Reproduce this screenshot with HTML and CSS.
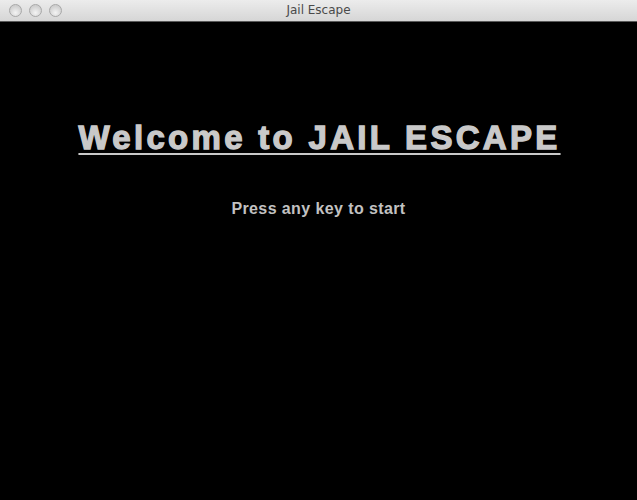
FILE: index.html
```html
<!DOCTYPE html>
<html>
<head>
<meta charset="utf-8">
<link rel="stylesheet" href="styles.css">
</head>
<body>
<div class="window">
  <div class="titlebar">
    <div class="lights">
      <span class="light"></span><span class="light"></span><span class="light"></span>
    </div>
    <div class="title">Jail Escape</div>
  </div>
  <main class="screen">
    <h1 class="heading">Welcome to JAIL ESCAPE</h1>
    <p class="prompt">Press any key to start</p>
  </main>
</div>
</body>
</html>
```
FILE: styles.css
```css
html, body {
  margin: 0;
  padding: 0;
  width: 637px;
  height: 500px;
  overflow: hidden;
  background: #000;
}
.window {
  display: flex;
  flex-direction: column;
  width: 637px;
  height: 500px;
}
.titlebar {
  position: relative;
  height: 21px;
  flex: none;
  background: linear-gradient(#ececec, #d6d6d6);
  border-bottom: 1px solid #5a5a5a;
  display: flex;
  align-items: center;
  justify-content: center;
}
.lights {
  position: absolute;
  left: 9px;
  top: 4px;
  display: flex;
  gap: 7px;
}
.light {
  width: 13px;
  height: 13px;
  border-radius: 50%;
  box-sizing: border-box;
  border: 1px solid #a8a8a8;
  background: radial-gradient(circle at 50% 70%, #f4f4f4, #cfcfcf 70%);
}
.title {
  font-family: "Lucida Grande", "DejaVu Sans", sans-serif;
  font-size: 12px;
  color: #4a4a4a;
  line-height: 21px;
}
.screen {
  flex: 1;
  background: #000;
  display: flex;
  flex-direction: column;
  align-items: center;
}
.heading {
  margin: 96px 0 0 0;
  font-family: "Liberation Sans", Arial, sans-serif;
  font-weight: 900;
  font-size: 33px;
  letter-spacing: 3.3px;
  color: #c9c9c9;
  line-height: 40px;
  text-decoration: underline;
  text-decoration-thickness: 2px;
  text-underline-offset: 4px;
  -webkit-text-stroke: 1.3px #c9c9c9;
  padding-left: 2px;
}
.prompt {
  margin: 41px 0 0 0;
  font-family: "Liberation Sans", Arial, sans-serif;
  font-weight: 700;
  font-size: 16px;
  letter-spacing: 0.4px;
  color: #c2c2c2;
  line-height: 20px;
}
```
